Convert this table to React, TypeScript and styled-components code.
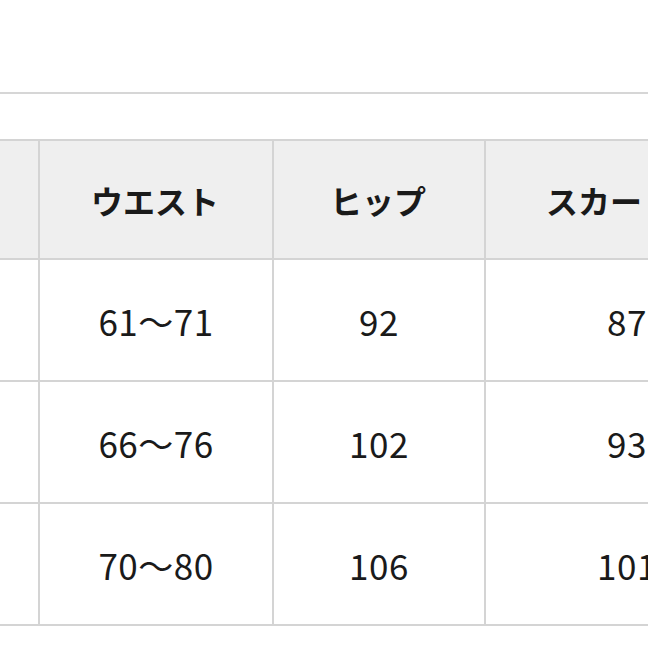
import styled, { createGlobalStyle } from "styled-components";

const GlobalStyle = createGlobalStyle`
  html, body {
    margin: 0;
    padding: 0;
    background: #ffffff;
  }
  body {
    font-family: "Noto Sans CJK JP", "Noto Sans", sans-serif;
    color: #1a1a1a;
  }
`;

const columns = ["", "ウエスト", "ヒップ", "スカート丈"];

const rows = [
  ["S", "61～71", "92", "87"],
  ["M", "66～76", "102", "93"],
  ["L", "70～80", "106", "101"],
];

const App = () => {
  return (
    <>
      <GlobalStyle />
      <Page>
        <Rule />
        <TableFrame>
          <SizeGrid>
            {columns.map((label, i) => (
              <HeadCell key={`h-${i}`}>{i === 0 ? "" : label}</HeadCell>
            ))}
            {rows.map((row, r) =>
              row.map((value, c) => (
                <BodyCell key={`${r}-${c}`}>{c === 0 ? "" : value}</BodyCell>
              ))
            )}
          </SizeGrid>
        </TableFrame>
      </Page>
    </>
  );
};

export default App;

const Page = styled.div`
  width: 648px;
  height: 648px;
  overflow: hidden;
  background: #ffffff;
  padding-top: 92px;
  box-sizing: border-box;
`;

const Rule = styled.div`
  height: 2px;
  background: #d6d6d6;
`;

const TableFrame = styled.div`
  margin-top: 45px;
  width: 648px;
  overflow: hidden;
`;

const SizeGrid = styled.div`
  display: grid;
  grid-template-columns: 38px 232px 210px 282px;
  grid-template-rows: 117px 120px 120px 120px;
  gap: 2px;
  padding: 2px 0;
  width: 768px;
  background: #d4d4d4;
`;

const Cell = styled.div`
  display: flex;
  align-items: center;
  justify-content: center;
  white-space: nowrap;
  line-height: 1;
`;

const HeadCell = styled(Cell)`
  background: #efefef;
  font-weight: 700;
  font-size: 32px;
  padding-right: 2px;
`;

const BodyCell = styled(Cell)`
  background: #ffffff;
  font-weight: 400;
  font-size: 35px;
  letter-spacing: 0.5px;
`;
